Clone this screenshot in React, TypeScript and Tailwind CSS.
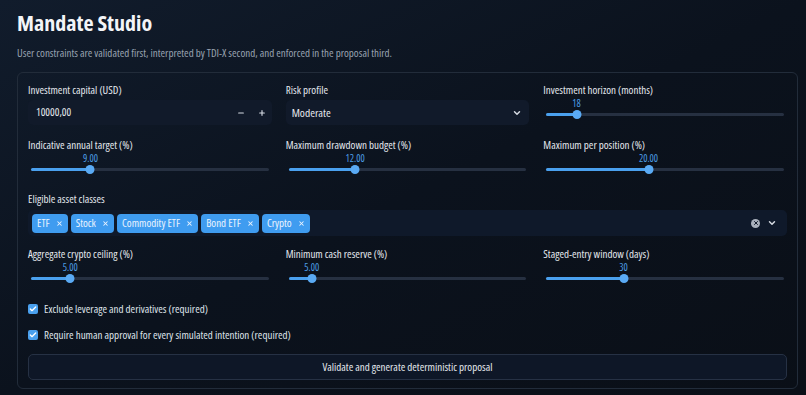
import { Check, ChevronDown, Minus, Plus, X } from "lucide-react";

interface SliderProps {
  label: string;
  value: string;
  pct: number;
}

const Slider = ({ label, value, pct }: SliderProps) => {
  return (
    <div className="flex flex-col">
      <span className="text-[11px] leading-[14px] text-[#e3e7ed]">{label}</span>
      <div className="relative mx-[3px] h-[22px]">
        <span
          className="absolute top-0 -translate-x-1/2 text-[10px] leading-[12px] text-[#4d9ee6]"
          style={{ left: `${pct}%` }}
        >
          {value}
        </span>
        <div className="absolute left-0 right-0 top-[16px] h-[3px] rounded-full bg-[#263041]" />
        <div
          className="absolute left-0 top-[16px] h-[3px] rounded-full bg-[#4aa0ee]"
          style={{ width: `${pct}%` }}
        />
        <div
          className="absolute top-[13px] h-[9px] w-[9px] -translate-x-1/2 rounded-full bg-[#5aaaf4]"
          style={{ left: `${pct}%` }}
        />
      </div>
    </div>
  );
};

const Tag = ({ text }: { text: string }) => (
  <span className="flex h-[19px] items-center gap-[6px] rounded-[4px] bg-[#3f9cf0] pl-[5px] pr-[5px] text-[11px] text-[#e9f3fe]">
    {text}
    <X size={7} strokeWidth={3.5} />
  </span>
);

const CheckRow = ({ text }: { text: string }) => (
  <label className="flex h-[14px] items-center gap-[6px] text-[11px] text-[#dfe3ea]">
    <span className="flex h-[10px] w-[10px] items-center justify-center rounded-[2px] bg-[#4aa0ee]">
      <Check size={8} strokeWidth={4} color="#fff" />
    </span>
    {text}
  </label>
);

const App = () => {
  const tags = ["ETF", "Stock", "Commodity ETF", "Bond ETF", "Crypto"];

  return (
    <div className="min-h-[395px] bg-gradient-to-br from-[#111c2c] via-[#0b121d] to-[#0a0f17] pl-[17px] pr-[8px] pt-[6px] pb-[6px] font-['Open_Sans',sans-serif] font-stretch-condensed">
      <h1 className="text-[22px] font-bold leading-[32px] text-[#f3f5f8]">Mandate Studio</h1>
      <p className="mt-[8px] text-[11px] leading-[14px] text-[#98a2b0]">
        User constraints are validated first, interpreted by TDI-X second, and enforced in the proposal third.
      </p>

      <div className="mt-[12px] rounded-[6px] border border-[#222c3a] px-[10px] pt-[10px] pb-[8px]">
        <div className="grid grid-cols-3 gap-x-[14px]">
          <div className="flex flex-col gap-[3px]">
            <span className="text-[11px] leading-[14px] text-[#e3e7ed]">Investment capital (USD)</span>
            <div className="flex h-[25px] items-center rounded-[5px] bg-[#111a2a] pl-[8px] pr-[6px] text-[11px] text-[#e6e9ee]">
              <span className="flex-1">10000,00</span>
              <Minus size={8} strokeWidth={3.5} className="mr-[13px] text-[#d5dae2]" />
              <Plus size={8} strokeWidth={3.5} className="text-[#d5dae2]" />
            </div>
          </div>
          <div className="flex flex-col gap-[3px]">
            <span className="text-[11px] leading-[14px] text-[#e3e7ed]">Risk profile</span>
            <div className="flex h-[25px] items-center rounded-[5px] bg-[#111a2a] pl-[6px] pr-[7px] text-[11.5px] text-[#e6e9ee]">
              <span className="flex-1">Moderate</span>
              <ChevronDown size={10} strokeWidth={3.5} className="text-[#d5dae2]" />
            </div>
          </div>
          <Slider label="Investment horizon (months)" value="18" pct={12.7} />
        </div>

        <div className="mt-[13px] grid grid-cols-3 gap-x-[14px]">
          <Slider label="Indicative annual target (%)" value="9.00" pct={25} />
          <Slider label="Maximum drawdown budget (%)" value="12.00" pct={28} />
          <Slider label="Maximum per position (%)" value="20.00" pct={43} />
        </div>

        <div className="mt-[18px] flex flex-col gap-[4px]">
          <span className="text-[11px] leading-[14px] text-[#e3e7ed]">Eligible asset classes</span>
          <div className="flex h-[26px] items-center rounded-[5px] bg-[#0f192a] pl-[4px] pr-[10px]">
            <div className="flex flex-1 gap-[3px]">
              {tags.map((t) => (
                <Tag key={t} text={t} />
              ))}
            </div>
            <span className="mr-[7px] flex h-[9px] w-[9px] items-center justify-center rounded-full bg-[#a9b0bb]">
              <X size={6} strokeWidth={4} color="#111a2a" />
            </span>
            <ChevronDown size={10} strokeWidth={3.5} className="text-[#d5dae2]" />
          </div>
        </div>

        <div className="mt-[11px] grid grid-cols-3 gap-x-[14px]">
          <Slider label="Aggregate crypto ceiling (%)" value="5.00" pct={16.5} />
          <Slider label="Minimum cash reserve (%)" value="5.00" pct={9.7} />
          <Slider label="Staged-entry window (days)" value="30" pct={32.5} />
        </div>

        <div className="mt-[19px] flex flex-col gap-[12px]">
          <CheckRow text="Exclude leverage and derivatives (required)" />
          <CheckRow text="Require human approval for every simulated intention (required)" />
        </div>

        <button className="mt-[12px] flex h-[26px] w-full items-center justify-center rounded-[5px] border border-[#263144] bg-[#0e1727] text-[11px] text-[#e3e7ed]">
          Validate and generate deterministic proposal
        </button>
      </div>
    </div>
  );
};

export default App;
